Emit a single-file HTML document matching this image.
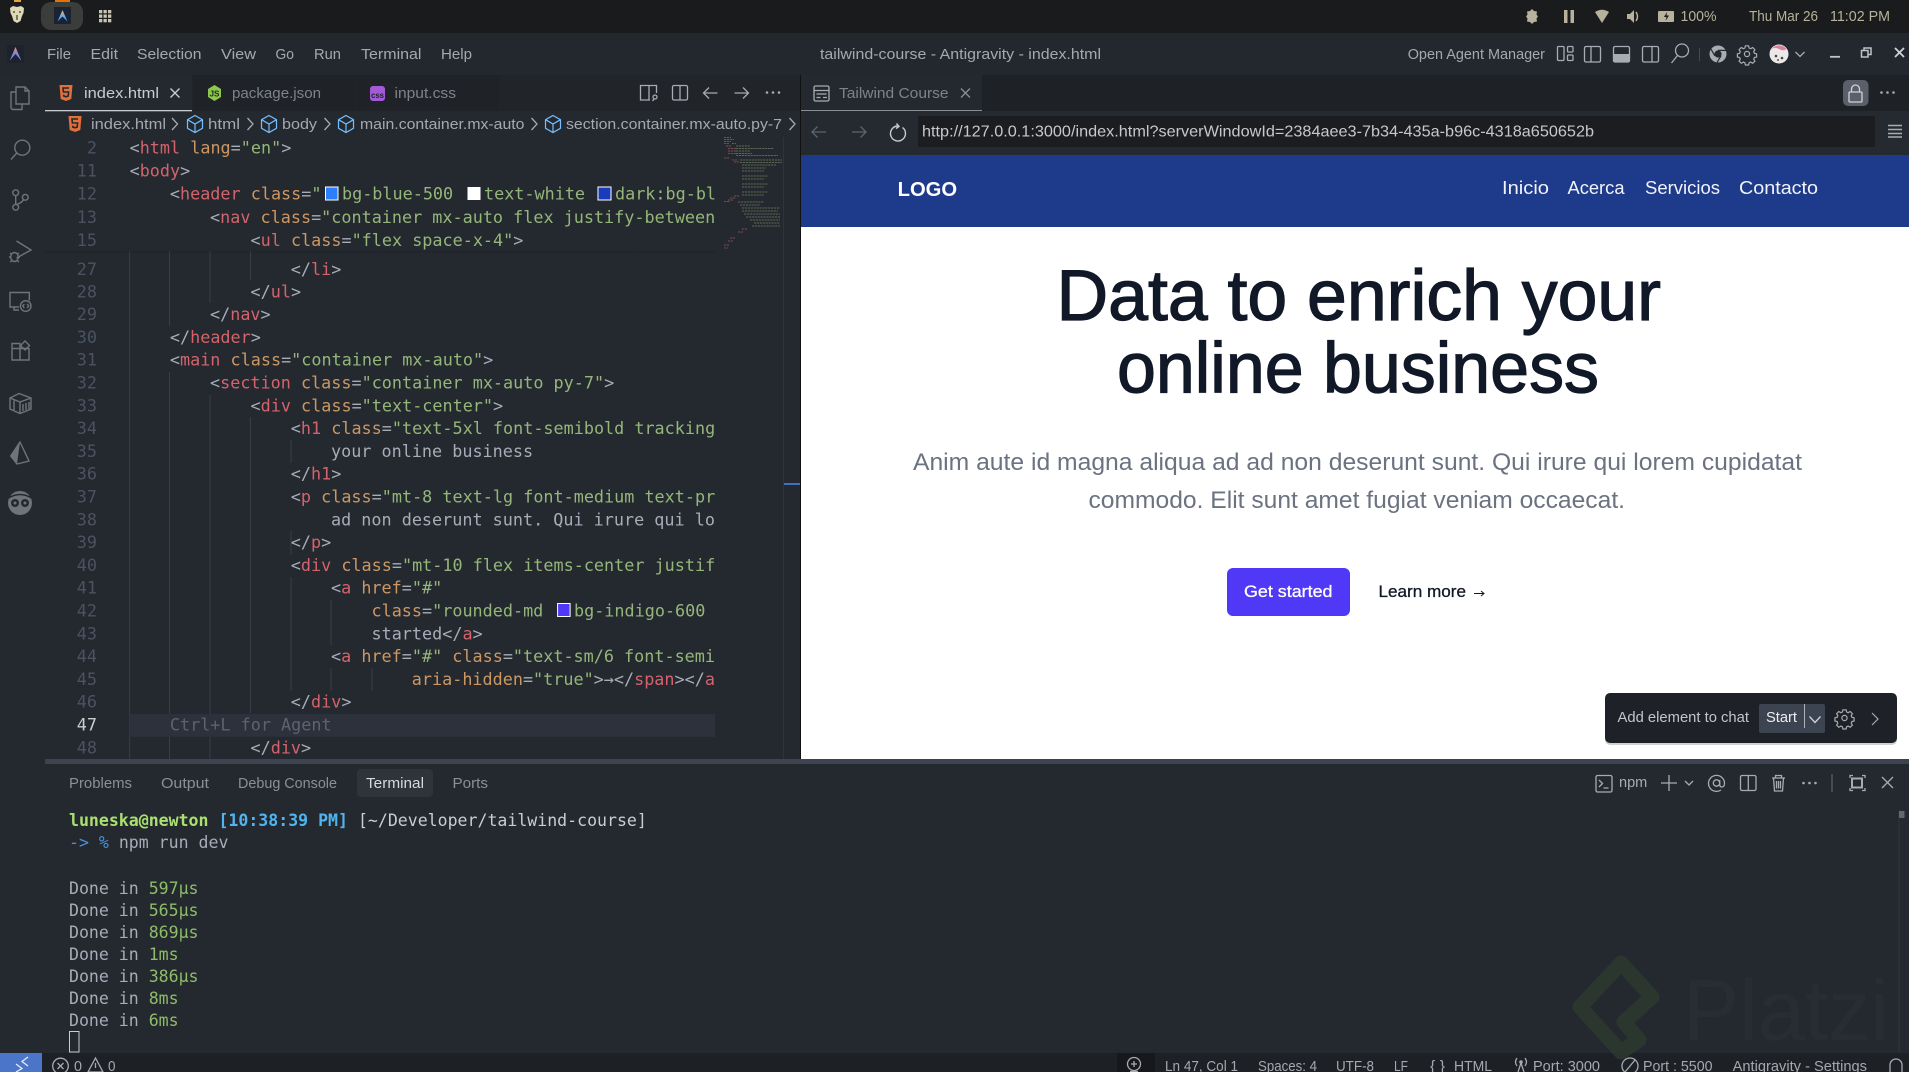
<!DOCTYPE html>
<html lang="en">
<head>
<meta charset="utf-8">
<title>tailwind-course - Antigravity - index.html</title>
<style>
html,body{margin:0;padding:0;width:1909px;height:1072px;overflow:hidden;background:#24292f}
svg{display:block}
text{font-family:"Liberation Sans",sans-serif;font-size:14.8px;fill:#a5a9af;white-space:pre}
.m text,text.m{font-family:"DejaVu Sans Mono","Liberation Mono",monospace;font-size:16.8px;fill:#a6adb9}
.t text{font-size:16.56px}
.r{fill:#d4636c}.a{fill:#cc9763}.s{fill:#95b67a}.g{fill:#abb2bf}
text.n{fill:#4b5361;text-anchor:end}
.i{fill:none;stroke:#6f747c;stroke-width:1.4}
.w{fill:none;stroke:#a8acb2;stroke-width:1.3}
.gd{stroke:#383d47;stroke-width:1}
.sys{fill:#b8b19b}
.mm{stroke-width:.9;stroke-dasharray:2.2 .7;opacity:.6;fill:none}
</style>
</head>
<body>
<svg xmlns="http://www.w3.org/2000/svg" width="1909" height="1072" viewBox="0 0 1909 1072">
<defs>
<clipPath id="code"><rect x="45" y="136" width="670" height="623"/></clipPath>
<linearGradient id="ag" x1="0" y1="0" x2="0" y2="1"><stop offset="0" stop-color="#eda25a"/><stop offset=".4" stop-color="#9a80c0"/><stop offset="1" stop-color="#3d8cf0"/></linearGradient>
<linearGradient id="ag2" x1="0" y1="0" x2="0" y2="1"><stop offset="0" stop-color="#e8b060"/><stop offset=".5" stop-color="#6fb0f0"/><stop offset="1" stop-color="#3d8cf0"/></linearGradient>
<linearGradient id="sh" x1="0" y1="0" x2="0" y2="1"><stop offset="0" stop-color="#000" stop-opacity=".12"/><stop offset="1" stop-color="#000" stop-opacity="0"/></linearGradient>
<g id="h5"><path d="M-6.5-8h13l-1.2 14-5.3 2-5.3-2z" fill="#e2703a"/><path d="M3-5h-6l.4 4h5.2l-.4 4-2.2.8-2.2-.8-.2-1.4" fill="none" stroke="#24292f" stroke-width="1.6"/></g>
<g id="cube"><path d="M0-8.5 7.5-4.3v8.6L0 8.5-7.5 4.3v-8.6zM-7.5-4.3 0 0 7.5-4.3M0 0v8.5" fill="none" stroke="#75beff" stroke-width="1.2"/></g>
<g id="gear"><circle r="2.6" fill="none" stroke="currentColor" stroke-width="1.2"/><path d="M-1.6-8.2h3.2l.5 2.2 1.6.7 2-1.2 2.2 2.2-1.2 2 .7 1.6 2.2.5v3.2l-2.2.5-.7 1.6 1.2 2-2.2 2.2-2-1.2-1.6.7-.5 2.2h-3.2l-.5-2.2-1.6-.7-2 1.2-2.2-2.2 1.2-2-.7-1.6-2.2-.5v-3.2l2.2-.5.7-1.6-1.2-2 2.2-2.2 2 1.2 1.6-.7z" fill="none" stroke="currentColor" stroke-width="1.2"/></g>
</defs>

<!-- base -->
<rect width="1909" height="1072" fill="#24292f"/>
<!-- top bar -->
<rect width="1909" height="33" fill="#191b1c"/>
<rect x="14" y="0" width="7" height="2" fill="#e8a33c"/>
<rect x="55" y="0" width="15" height="2" fill="#e8700a"/>
<path d="M10 8l3-2 4 1 4-1 3 2-.5 5-1.500 3-1.500 5-3.500 2-3.500-2-1.500-5-1.500-3z" fill="#ded7b8"/>
<path d="M13 12h2M19 12h2M17 15v5" stroke="#3a3528" stroke-width="1.2"/>
<rect x="41" y="2" width="42" height="28" rx="10" fill="#3a3d39"/>
<rect x="54" y="7" width="17" height="17" fill="#1b2232"/>
<path d="M57.500 21.500 62.500 10l5 11.500-5-5z" fill="url(#ag2)"/>
<g fill="#c9c5b2"><rect x="99" y="10" width="3.300" height="3.300"/><rect x="103.500" y="10" width="3.300" height="3.300"/><rect x="108" y="10" width="3.300" height="3.300"/><rect x="99" y="14.500" width="3.300" height="3.300"/><rect x="103.500" y="14.500" width="3.300" height="3.300"/><rect x="108" y="14.500" width="3.300" height="3.300"/><rect x="99" y="19" width="3.300" height="3.300"/><rect x="103.500" y="19" width="3.300" height="3.300"/><rect x="108" y="19" width="3.300" height="3.300"/></g>
<!-- systray -->
<g fill="#b8b19b">
<path d="M1532 9l2 2 3 .5-.5 3 1.500 2-1.500 2 .5 3-3 .5-2 2-2-2-3-.5.5-3-1.500-2 1.500-2-.5-3 3-.5z"/>
<rect x="1564" y="10" width="3.500" height="13"/><rect x="1570.500" y="10" width="3.500" height="13"/>
<path d="M1595 12q7-4.500 14 0l-7 11z"/>
<path d="M1627 14h3l4-4v13l-4-4h-3z"/><path d="M1636 12q3 4.500 0 9" fill="none" stroke="#b8b19b" stroke-width="1.500"/>
<rect x="1658" y="11" width="16" height="11" rx="1"/>
</g>
<path d="M1667 12l-3 5h2.500l-1 4 3.500-5.500h-2.500z" fill="#191b1c"/>
<text class="sys" x="1680.500" y="21" textLength="36" lengthAdjust="spacingAndGlyphs">100%</text>
<text class="sys" x="1749" y="21" textLength="69" lengthAdjust="spacingAndGlyphs">Thu Mar 26</text>
<text class="sys" x="1830" y="21" textLength="60" lengthAdjust="spacingAndGlyphs">11:02 PM</text>

<!-- title bar -->
<rect y="33" width="1909" height="42" fill="#23282f"/>
<rect x="7" y="45" width="17" height="18" fill="#1d222c"/>
<path d="M9.500 61 15.500 47l6 14-6-7z" fill="url(#ag)"/>
<text x="47" y="59" textLength="24" lengthAdjust="spacingAndGlyphs">File</text>
<text x="90.500" y="59" textLength="27.500" lengthAdjust="spacingAndGlyphs">Edit</text>
<text x="137" y="59" textLength="64.500" lengthAdjust="spacingAndGlyphs">Selection</text>
<text x="221" y="59" textLength="35" lengthAdjust="spacingAndGlyphs">View</text>
<text x="275.500" y="59" textLength="18.500" lengthAdjust="spacingAndGlyphs">Go</text>
<text x="314" y="59" textLength="27" lengthAdjust="spacingAndGlyphs">Run</text>
<text x="361" y="59" textLength="60.500" lengthAdjust="spacingAndGlyphs">Terminal</text>
<text x="441" y="59" textLength="31" lengthAdjust="spacingAndGlyphs">Help</text>
<text x="820" y="59" textLength="281" lengthAdjust="spacingAndGlyphs">tailwind-course - Antigravity - index.html</text>
<text x="1407.700" y="59" textLength="137.300" lengthAdjust="spacingAndGlyphs">Open Agent Manager</text>
<g class="w">
<rect x="1557.500" y="46.500" width="6.500" height="14" rx="1"/><rect x="1567.500" y="46.500" width="5.500" height="5.500" rx="1"/><rect x="1567.500" y="55" width="5.500" height="5.500" rx="1"/>
<rect x="1584.500" y="46.500" width="16" height="15.500" rx="1.500"/><path d="M1591 46.500v15.500"/>
<rect x="1613.500" y="46.500" width="16" height="15.500" rx="1.500"/>
<rect x="1642.500" y="46.500" width="16" height="15.500" rx="1.500"/><path d="M1652 46.500v15.500"/>
<circle cx="1682" cy="50.500" r="6.500"/><path d="M1677.500 55.500l-6 7.500"/>
</g>
<rect x="1613.500" y="54" width="16" height="8" fill="#a8acb2"/>
<path d="M1699.500 48v13" stroke="#444952"/>
<circle cx="1718" cy="54" r="8.500" fill="#a8acb2"/><circle cx="1718" cy="54" r="3.600" fill="#23282f"/><path d="M1718 50.400h8M1714.900 55.800l-4-6.800M1721 55.800l-4 6.700" stroke="#23282f" stroke-width="1.200"/>
<g transform="translate(1747 54)" color="#a8acb2"><use href="#gear"/></g>
<circle cx="1779" cy="54" r="9.500" fill="#ece8e8"/><path d="M1771.500 49a9.500 9.500 0 0 1 15 0q-3 2.500-7.500 0t-7.500 0z" fill="#dc7f9a"/><circle cx="1776" cy="56" r="1.300" fill="#444"/><circle cx="1782" cy="58" r="1.300" fill="#444"/><circle cx="1778" cy="60" r="1" fill="#555"/>
<path d="M1795.500 52l4.500 4.500 4.500-4.500" class="w"/>
<path d="M1830 56.800h10" stroke="#c0c3c8" stroke-width="1.800"/>
<rect x="1864" y="48" width="7" height="6.500" fill="none" stroke="#c0c3c8" stroke-width="1.500"/><rect x="1861.500" y="50.500" width="6.500" height="6.500" fill="#23282f" stroke="#c0c3c8" stroke-width="1.500"/>
<path d="M1895 48l9 9M1904 48l-9 9" stroke="#d0d3d8" stroke-width="1.800"/>

<!-- editor tab strip -->
<rect x="45" y="75" width="756" height="36" fill="#212529"/>
<rect x="45" y="75" width="147" height="36" fill="#24292f"/>
<rect x="193" y="75" width="162" height="36" fill="#1f2328"/>
<rect x="356" y="75" width="143" height="36" fill="#1f2328"/>
<rect x="45" y="110" width="147" height="1.300" fill="#c8ccd2"/>
<use href="#h5" x="66" y="93"/>
<text x="84" y="98" textLength="75" lengthAdjust="spacingAndGlyphs" style="fill:#c8ccd2;font-size:15px">index.html</text>
<path d="M170.500 88.500l9 9M179.500 88.500l-9 9" stroke="#c8ccd2" stroke-width="1.400"/>
<path d="M214.500 85l6.500 4v8l-6.500 4-6.500-4v-8z" fill="#8cc84b"/>
<text x="209.500" y="96.500" textLength="10" lengthAdjust="spacingAndGlyphs" style="fill:#24292f;font-size:8.500px;font-weight:bold">JS</text>
<text x="232" y="98" textLength="89" lengthAdjust="spacingAndGlyphs" style="fill:#7e838a;font-size:15px">package.json</text>
<rect x="370" y="86" width="15" height="15" rx="3" fill="#a45ad8"/>
<text x="371" y="98" textLength="13" lengthAdjust="spacingAndGlyphs" style="fill:#1f2328;font-size:8.500px;font-weight:bold">css</text>
<text x="394.500" y="98" textLength="61.500" lengthAdjust="spacingAndGlyphs" style="fill:#7e838a;font-size:15px">input.css</text>
<g class="w">
<path d="M650 100h-9.500v-14.500h16v7.500M649 85.500v14.500"/><circle cx="655" cy="97" r="2"/><path d="M654 99l-1.500 2"/>
<rect x="672.500" y="85.500" width="15" height="14.500" rx="1.500"/><path d="M680 85.500v14.500"/>
<path d="M703.500 93h14M709 87.500l-5.500 5.500 5.500 5.500"/>
<path d="M734.500 93h14M743 87.500l5.500 5.500-5.500 5.500"/>
</g>
<g fill="#a8acb2"><circle cx="767" cy="92.500" r="1.300"/><circle cx="773" cy="92.500" r="1.300"/><circle cx="779" cy="92.500" r="1.300"/></g>

<!-- breadcrumbs -->
<use href="#h5" x="75" y="124"/>
<text x="91" y="129" textLength="75" lengthAdjust="spacingAndGlyphs">index.html</text>
<path d="M172 118l5.500 6-5.500 6M247.500 118l5.500 6-5.500 6M324.500 118l5.500 6-5.500 6M531.500 118l5.500 6-5.500 6M789.500 118l5.500 6-5.500 6" class="w"/>
<use href="#cube" x="195" y="124"/>
<text x="208" y="129" textLength="32" lengthAdjust="spacingAndGlyphs">html</text>
<use href="#cube" x="269" y="124"/>
<text x="282" y="129" textLength="35" lengthAdjust="spacingAndGlyphs">body</text>
<use href="#cube" x="346" y="124"/>
<text x="360" y="129" textLength="164.500" lengthAdjust="spacingAndGlyphs">main.container.mx-auto</text>
<use href="#cube" x="553" y="124"/>
<text x="566" y="129" textLength="216" lengthAdjust="spacingAndGlyphs">section.container.mx-auto.py-7</text>

<!-- activity bar icons -->
<g class="i">
<path d="M16 87h9l4 4v13h-13z"/><path d="M16 92h-5v16l1.500 1.500H22v-5.500"/><path d="M25 87v4h4"/>
<circle cx="22.300" cy="147.700" r="7.500"/><path d="M16.800 153l-5.800 6.500"/>
<circle cx="15.700" cy="192.700" r="2.900"/><circle cx="25.300" cy="197.300" r="2.900"/><circle cx="15.700" cy="207.300" r="2.900"/><path d="M15.700 195.600v8.800M23.500 199.500q-1 3-7 5"/>
<path d="M16.500 241l14.500 9-14.500 8"/><ellipse cx="14.500" cy="257" rx="3.800" ry="4.500"/><path d="M10 253l2 1.500M19 253l-2 1.500M9 257h2M18 257h2M10 262l2-1.500M19 262l-2-1.500"/>
<path d="M19 307h-9v-14.500h19.300v8M14 307v3h5"/><circle cx="25.700" cy="306" r="5.300"/><path d="M24.300 304l-1.500 2 1.500 2M27.200 304l1.500 2-1.500 2"/>
<path d="M12 348.500h8v11.500h-8zM20 348.500h9v11.500h-9zM12 343.500h8v5h-8z"/><path d="M25 341l4.500 4.500-4.500 4.500-4.500-4.500z"/>
<path d="M10 398l9-4.500 12 4.500v11l-11 4.500-10-4.500zM10 398l10 4 11-4M20 402v11.500M23 404v7M26 403v7M29 402v7M14 400.500v9.500"/>
</g>
<path d="M20 442 29 461 17 464 10.700 456z" fill="none" stroke="#6f747c" stroke-width="1.400"/>
<path d="M20 442 17 464 10.700 456z" fill="#6f747c"/>
<circle cx="20" cy="503" r="12" fill="#6f747c"/>
<circle cx="15" cy="503" r="4" fill="#24292f"/><circle cx="25" cy="503" r="4" fill="#24292f"/><circle cx="15" cy="503" r="1.500" fill="#6f747c"/><circle cx="25" cy="503" r="1.500" fill="#6f747c"/><path d="M8.500 498q11.500-7 23 0" fill="none" stroke="#24292f" stroke-width="1.500"/>

<!-- code: guides -->
<g class="gd">
<path d="M129.600 251V759"/>
<path d="M169.500 251V326M169.500 372V759"/>
<path d="M210 251V303M210 395V759"/>
<path d="M250.500 251V280M250.500 417V713"/>
<path d="M291 440V463M291 531V555M291 577V691"/>
<path d="M331 600V645M331 668V691"/>
<path d="M372 668V691"/>
<path d="M783.500 137V759" stroke="#2f343c"/>
</g>
<rect x="129.600" y="714" width="585.400" height="22.800" fill="#2c313c"/>
<rect x="784" y="483" width="17" height="2" fill="#3f6fc0"/>

<g class="m" clip-path="url(#code)">
<text class="n" x="97" y="153.500">2</text>
<text x="129.600" y="153.500">&lt;<tspan class="r">html</tspan> <tspan class="a">lang</tspan>=<tspan class="s">"en"</tspan>&gt;</text>
<text class="n" x="97" y="176.500">11</text>
<text x="129.600" y="176.500">&lt;<tspan class="r">body</tspan>&gt;</text>
<text class="n" x="97" y="199.300">12</text>
<text x="169.900" y="199.300">&lt;<tspan class="r">header</tspan> <tspan class="a">class</tspan>=<tspan class="s">"</tspan></text>
<rect x="325.500" y="187" width="12.500" height="13" fill="#2b7fff" stroke="#fff" stroke-width="1"/>
<text x="342" y="199.300" style="fill:#95b67a">bg-blue-500</text>
<rect x="467.500" y="187" width="13" height="13" fill="#fff"/>
<text x="484" y="199.300" style="fill:#95b67a">text-white</text>
<rect x="598" y="187" width="13" height="13" fill="#193cb8" stroke="#fff" stroke-width="1"/>
<text x="615" y="199.300" style="fill:#95b67a">dark:bg-bl</text>
<text class="n" x="97" y="223">13</text>
<text x="210" y="223">&lt;<tspan class="r">nav</tspan> <tspan class="a">class</tspan>=<tspan class="s">"container mx-auto flex justify-between</tspan></text>
<text class="n" x="97" y="246">15</text>
<text x="250.500" y="246">&lt;<tspan class="r">ul</tspan> <tspan class="a">class</tspan>=<tspan class="s">"flex space-x-4"</tspan>&gt;</text>
<g transform="translate(0 -.5)">
<text class="n" x="97" y="275.500">27</text>
<text x="290.800" y="275.500">&lt;/<tspan class="r">li</tspan>&gt;</text>
<text class="n" x="97" y="297.800">28</text>
<text x="250.500" y="297.800">&lt;/<tspan class="r">ul</tspan>&gt;</text>
<text class="n" x="97" y="320.600">29</text>
<text x="210" y="320.600">&lt;/<tspan class="r">nav</tspan>&gt;</text>
<text class="n" x="97" y="343.400">30</text>
<text x="169.900" y="343.400">&lt;/<tspan class="r">header</tspan>&gt;</text>
<text class="n" x="97" y="366.200">31</text>
<text x="169.900" y="366.200">&lt;<tspan class="r">main</tspan> <tspan class="a">class</tspan>=<tspan class="s">"container mx-auto"</tspan>&gt;</text>
<text class="n" x="97" y="389">32</text>
<text x="210" y="389">&lt;<tspan class="r">section</tspan> <tspan class="a">class</tspan>=<tspan class="s">"container mx-auto py-7"</tspan>&gt;</text>
<text class="n" x="97" y="411.800">33</text>
<text x="250.500" y="411.800">&lt;<tspan class="r">div</tspan> <tspan class="a">class</tspan>=<tspan class="s">"text-center"</tspan>&gt;</text>
<text class="n" x="97" y="434.600">34</text>
<text x="290.800" y="434.600">&lt;<tspan class="r">h1</tspan> <tspan class="a">class</tspan>=<tspan class="s">"text-5xl font-semibold tracking</tspan></text>
<text class="n" x="97" y="457.400">35</text>
<text x="331" y="457.400">your online business</text>
<text class="n" x="97" y="480.200">36</text>
<text x="290.800" y="480.200">&lt;/<tspan class="r">h1</tspan>&gt;</text>
<text class="n" x="97" y="503">37</text>
<text x="290.800" y="503">&lt;<tspan class="r">p</tspan> <tspan class="a">class</tspan>=<tspan class="s">"mt-8 text-lg font-medium text-pr</tspan></text>
<text class="n" x="97" y="525.800">38</text>
<text x="331" y="525.800">ad non deserunt sunt. Qui irure qui lo</text>
<text class="n" x="97" y="548.600">39</text>
<text x="290.800" y="548.600">&lt;/<tspan class="r">p</tspan>&gt;</text>
<text class="n" x="97" y="571.400">40</text>
<text x="290.800" y="571.400">&lt;<tspan class="r">div</tspan> <tspan class="a">class</tspan>=<tspan class="s">"mt-10 flex items-center justif</tspan></text>
<text class="n" x="97" y="594.200">41</text>
<text x="331" y="594.200">&lt;<tspan class="r">a</tspan> <tspan class="a">href</tspan>=<tspan class="s">"#"</tspan></text>
<text class="n" x="97" y="617">42</text>
<text x="371.500" y="617"><tspan class="a">class</tspan>=<tspan class="s">"rounded-md</tspan></text>
<text x="574" y="617" style="fill:#95b67a">bg-indigo-600</text>
<text class="n" x="97" y="639.800">43</text>
<text x="371.500" y="639.800">started&lt;/<tspan class="r">a</tspan>&gt;</text>
<text class="n" x="97" y="662.600">44</text>
<text x="331" y="662.600">&lt;<tspan class="r">a</tspan> <tspan class="a">href</tspan>=<tspan class="s">"#"</tspan> <tspan class="a">class</tspan>=<tspan class="s">"text-sm/6 font-semi</tspan></text>
<text class="n" x="97" y="685.400">45</text>
<text x="411.800" y="685.400"><tspan class="a">aria-hidden</tspan>=<tspan class="s">"true"</tspan>&gt;→&lt;/<tspan class="r">span</tspan>&gt;&lt;/<tspan class="r">a</tspan></text>
<text class="n" x="97" y="708.200">46</text>
<text x="290.800" y="708.200">&lt;/<tspan class="r">div</tspan>&gt;</text>
<text class="n" x="97" y="731" style="fill:#c8ccd3">47</text>
<text x="169.900" y="731" style="fill:#5c6370">Ctrl+L for Agent</text>
<text class="n" x="97" y="753.800">48</text>
<text x="250.500" y="753.800">&lt;/<tspan class="r">div</tspan>&gt;</text>
</g>
</g>
<rect x="557.600" y="603.500" width="12.500" height="13" fill="#4f39f6" stroke="#fff" stroke-width="1"/>
<rect x="45" y="251" width="670" height="3" fill="url(#sh)"/>

<!-- minimap -->
<path class="mm" stroke="#b4606a" d="M724 137.500h7M724 139.500h10M724 141.500h7M724 143.500h5M726 146h5M728 148.500h8M728 151h8M728 153.500h8M724 158h6M732 160h6M734 162h5M734 196h6M730 198h6M728 200h5M724 201.500h6M742 229h5M738 232h5M730 238h5M728 241h5M724 245h5M724 248h4"/>
<path class="mm" stroke="#7e8f6c" d="M732 143.500h4M736 146h14M736 148.500h38M736 151h14M736 153.500h16M736 155.500h42M740 160h42M740 162.500h42M742 165h34M742 168h24M742 171h22M742 176h26M742 179h22M742 184h26M742 187h22M742 192h26M742 195h22"/>
<path class="mm" stroke="#7e8f6c" d="M738 202h26M740 205h20M742 208h38M742 211h36M744 214h36M746 217h34M750 220h30M754 223h26M752 226h28"/>

<!-- browser -->
<rect x="800" y="75" width="1" height="684" fill="#111"/>
<rect x="801" y="75" width="1108" height="36" fill="#1e2227"/>
<rect x="801" y="75" width="181" height="36" fill="#24292f"/>
<rect x="801" y="110" width="181" height="1.200" fill="#8a8e94"/>
<rect x="801" y="111" width="1108" height="44" fill="#252a31"/>
<rect x="814" y="86" width="15" height="15" rx="1.500" class="w"/><path d="M814 90.500h15M816.500 94h10M816.500 97.500h4M823 97.500h4" class="w"/>
<text x="839" y="98" textLength="109.500" lengthAdjust="spacingAndGlyphs" style="fill:#7e838a;font-size:15px">Tailwind Course</text>
<path d="M961 88.500l9 9M970 88.500l-9 9" stroke="#8a8e94" stroke-width="1.300"/>
<rect x="1843" y="80" width="25.500" height="26" rx="5" fill="#5a5f69"/>
<rect x="1849" y="92" width="13" height="10" rx="1" fill="none" stroke="#d0d3d8" stroke-width="1.300"/><path d="M1851.500 92v-3a4 4 0 0 1 8 0v3" fill="none" stroke="#d0d3d8" stroke-width="1.300"/>
<g fill="#a8acb2"><circle cx="1881.500" cy="92.500" r="1.300"/><circle cx="1887.500" cy="92.500" r="1.300"/><circle cx="1893.500" cy="92.500" r="1.300"/></g>
<path d="M812 132h14M817.500 126.500 812 132l5.500 5.500M852 132h14M860.500 126.500l5.500 5.500-5.500 5.500" fill="none" stroke="#5f646c" stroke-width="1.300"/>
<path d="M897.500 126a7.500 7.500 0 1 0 5 1.500M896.500 123.500l2.500 3-3 2" fill="none" stroke="#c8ccd2" stroke-width="1.400"/>
<rect x="918" y="116" width="957" height="31" fill="#1b1d21"/>
<text x="922" y="136.500" textLength="672" lengthAdjust="spacingAndGlyphs" style="fill:#c6c8cc;font-size:16px">http://127.0.0.1:3000/index.html?serverWindowId=2384aee3-7b34-435a-b96c-4318a650652b</text>
<path d="M1888 125.500h14M1888 129.500h14M1888 133.500h14M1888 137h14" stroke="#a8acb2" stroke-width="1.400"/>

<!-- page -->
<rect x="801" y="155" width="1108" height="604" fill="#fff"/>
<rect x="801" y="155" width="1108" height="72" fill="#1e3a8a"/>
<text x="897.600" y="196" textLength="59.500" lengthAdjust="spacingAndGlyphs" style="fill:#fff;font-size:20.500px;font-weight:bold">LOGO</text>
<text x="1502" y="194" textLength="47" lengthAdjust="spacingAndGlyphs" style="fill:#f1f3f9;font-size:18.500px">Inicio</text>
<text x="1567.500" y="194" textLength="57" lengthAdjust="spacingAndGlyphs" style="fill:#f1f3f9;font-size:18.500px">Acerca</text>
<text x="1645" y="194" textLength="75" lengthAdjust="spacingAndGlyphs" style="fill:#f1f3f9;font-size:18.500px">Servicios</text>
<text x="1739" y="194" textLength="79" lengthAdjust="spacingAndGlyphs" style="fill:#f1f3f9;font-size:18.500px">Contacto</text>
<text x="1056.500" y="320" textLength="604.500" lengthAdjust="spacingAndGlyphs" style="fill:#111827;font-size:71px;stroke:#111827;stroke-width:1.200px">Data to enrich your</text>
<text x="1117" y="392.500" textLength="482" lengthAdjust="spacingAndGlyphs" style="fill:#111827;font-size:71px;stroke:#111827;stroke-width:1.200px">online business</text>
<text x="913" y="470" textLength="889" lengthAdjust="spacingAndGlyphs" style="fill:#6b7280;font-size:24.500px">Anim aute id magna aliqua ad ad non deserunt sunt. Qui irure qui lorem cupidatat</text>
<text x="1088.500" y="508" textLength="536.500" lengthAdjust="spacingAndGlyphs" style="fill:#6b7280;font-size:24.500px">commodo. Elit sunt amet fugiat veniam occaecat.</text>
<rect x="1227" y="568" width="123" height="48" rx="6" fill="#4f39f6"/>
<text x="1244" y="597" textLength="88.500" lengthAdjust="spacingAndGlyphs" style="fill:#fff;font-size:17px;stroke:#fff;stroke-width:.3px">Get started</text>
<text x="1378.500" y="597" textLength="87.500" lengthAdjust="spacingAndGlyphs" style="fill:#111827;font-size:17px;stroke:#111827;stroke-width:.3px">Learn more</text>
<path d="M1474 593.500h10M1481 591l3 2.500-3 2.500" fill="none" stroke="#111827" stroke-width="1"/>
<!-- widget -->
<rect x="1605" y="693" width="292" height="50" rx="5" fill="#000" opacity=".18" transform="translate(0 2)"/>
<rect x="1605" y="693" width="292" height="50" rx="5" fill="#1e2228"/>
<text x="1617.500" y="722" textLength="131.500" lengthAdjust="spacingAndGlyphs" style="fill:#c2c5ca">Add element to chat</text>
<rect x="1759" y="704" width="66" height="29" rx="2" fill="#3c4452"/>
<text x="1766" y="722" textLength="31" lengthAdjust="spacingAndGlyphs" style="fill:#eceef1">Start</text>
<path d="M1804.500 704v24" stroke="#aeb2b9"/>
<path d="M1809.500 716.500l5.500 6 5.500-6" fill="none" stroke="#d0d3d8" stroke-width="1.300"/>
<g transform="translate(1844.500 718)" color="#a8acb2"><use href="#gear"/></g>
<path d="M1872 713l6 6-6 6" fill="none" stroke="#a8acb2" stroke-width="1.200"/>

<!-- sash -->
<rect x="45" y="759" width="1864" height="5" fill="#3d4450"/>

<!-- panel -->
<rect x="357" y="769" width="76" height="28" rx="4" fill="#2f343b"/>
<text x="69" y="788" textLength="63" lengthAdjust="spacingAndGlyphs" style="fill:#8b8f96">Problems</text>
<text x="161" y="788" textLength="48" lengthAdjust="spacingAndGlyphs" style="fill:#8b8f96">Output</text>
<text x="238" y="788" textLength="99" lengthAdjust="spacingAndGlyphs" style="fill:#8b8f96">Debug Console</text>
<text x="366" y="788" textLength="58" lengthAdjust="spacingAndGlyphs" style="fill:#d6d9dd">Terminal</text>
<text x="452.500" y="788" textLength="35.500" lengthAdjust="spacingAndGlyphs" style="fill:#8b8f96">Ports</text>
<g class="w">
<rect x="1596" y="775.500" width="16" height="16.500" rx="1.500"/><path d="M1599 780l3.500 3.500-3.500 3.500M1603.500 788h5"/>
<path d="M1661 783h16M1669 775v16"/>
<path d="M1685 781l4 4 4-4"/>
<circle cx="1716.500" cy="783" r="3.200"/><path d="M1719.700 780v4.500q0 2.500 2.300 2.500t2.500-3.500a8 8 0 1 0-3.500 6.500"/>
<rect x="1740.500" y="775.500" width="15.500" height="15" rx="1.500"/><path d="M1748.300 775.500v15"/>
<path d="M1772 778h13M1775.500 778v-2.500h6v2.500M1773.500 778l1 13h8l1-13M1776.500 781v7.500M1778.500 781v7.500M1780.500 781v7.500"/>
<path d="M1850 778v-2.500h3M1862 775.500h3v2.500M1865 788v2.500h-3M1853 790.500h-3v-2.500"/>
<path d="M1882 777l11 11M1893 777l-11 11"/>
</g>
<rect x="1852" y="778.500" width="10" height="9" fill="none" stroke="#a8acb2" stroke-width="2"/>
<text x="1619" y="787" textLength="28.300" lengthAdjust="spacingAndGlyphs" style="fill:#a8acb2">npm</text>
<g fill="#a8acb2"><circle cx="1803.500" cy="783" r="1.300"/><circle cx="1809.500" cy="783" r="1.300"/><circle cx="1815.500" cy="783" r="1.300"/></g>
<path d="M1832 774v18" stroke="#6a6f77"/>

<!-- terminal -->
<g class="m t">
<text x="69" y="826"><tspan style="fill:#a9e070;font-weight:bold">luneska@newton</tspan> <tspan style="fill:#4fb4ef;font-weight:bold">[10:38:39 PM]</tspan> <tspan style="fill:#c9cdd2">[~/Developer/tailwind-course]</tspan></text>
<text x="69" y="848"><tspan style="fill:#4a90d9">-&gt; %</tspan> npm run dev</text>
<text x="69" y="894">Done in <tspan style="fill:#8fbc6a">597µs</tspan></text>
<text x="69" y="916">Done in <tspan style="fill:#8fbc6a">565µs</tspan></text>
<text x="69" y="938">Done in <tspan style="fill:#8fbc6a">869µs</tspan></text>
<text x="69" y="960">Done in <tspan style="fill:#8fbc6a">1ms</tspan></text>
<text x="69" y="982">Done in <tspan style="fill:#8fbc6a">386µs</tspan></text>
<text x="69" y="1004">Done in <tspan style="fill:#8fbc6a">8ms</tspan></text>
<text x="69" y="1026">Done in <tspan style="fill:#8fbc6a">6ms</tspan></text>
</g>
<rect x="69.500" y="1031.500" width="9.500" height="20.500" fill="none" stroke="#c8ccd2" stroke-width="1"/>
<path d="M1899 810v243" stroke="#2f343b"/>
<rect x="1899" y="811" width="5.500" height="7" fill="#62666d"/>

<!-- status bar -->
<rect y="1053" width="1909" height="19" fill="#1d2024"/>
<rect y="1053" width="42" height="19" fill="#4a75c9"/>
<path d="M16 1064l6 4.500-6 3.500M28 1057l-6 4.500 6 4.500" fill="none" stroke="#e6ecf8" stroke-width="1.300"/>
<circle cx="60.500" cy="1066" r="7.800" class="w"/><path d="M57.500 1063l6 6M63.500 1063l-6 6" class="w"/>
<text x="74" y="1071" textLength="8" lengthAdjust="spacingAndGlyphs">0</text>
<path d="M95.500 1058l7.500 14h-15z" class="w"/><path d="M95.500 1063v5" class="w"/>
<text x="108" y="1071" textLength="7.500" lengthAdjust="spacingAndGlyphs">0</text>
<rect x="1117" y="1053" width="38" height="19" fill="#16181b"/>
<circle cx="1134" cy="1064" r="6.500" class="w"/><path d="M1131 1064h6M1134 1061v6M1130 1071.500h8" class="w"/>
<text x="1165" y="1071" textLength="73" lengthAdjust="spacingAndGlyphs">Ln 47, Col 1</text>
<text x="1258" y="1071" textLength="59" lengthAdjust="spacingAndGlyphs">Spaces: 4</text>
<text x="1336" y="1071" textLength="38" lengthAdjust="spacingAndGlyphs">UTF-8</text>
<text x="1394" y="1071" textLength="14" lengthAdjust="spacingAndGlyphs">LF</text>
<text x="1430" y="1071" textLength="15" lengthAdjust="spacingAndGlyphs">{ }</text>
<text x="1454" y="1071" textLength="38" lengthAdjust="spacingAndGlyphs">HTML</text>
<path d="M1517 1058q-3 4 0 8M1525 1058q3 4 0 8M1521 1063l-3 9M1521 1063l3 9" class="w"/><circle cx="1521" cy="1062" r="1.800" fill="#a8acb2"/>
<text x="1533" y="1071" textLength="67" lengthAdjust="spacingAndGlyphs">Port: 3000</text>
<circle cx="1630" cy="1066" r="8" class="w"/><path d="M1625 1072l10-12" class="w"/>
<text x="1643" y="1071" textLength="69.500" lengthAdjust="spacingAndGlyphs">Port : 5500</text>
<text x="1732.600" y="1071" textLength="134.400" lengthAdjust="spacingAndGlyphs">Antigravity - Settings</text>
<path d="M1890 1072v-7a6 6 0 0 1 12 0v7" class="w"/>

<!-- watermark -->
<path d="M1621 963 1652 997 1624 1022 1639 1040 1621 1052 1580 1007z" fill="none" stroke="#2d382f" stroke-width="15" stroke-linejoin="round" opacity=".85"/>
<text x="1683" y="1040" textLength="206" lengthAdjust="spacingAndGlyphs" style="fill:#282d33;font-size:86px">Platzi</text>
</svg>
</body>
</html>
